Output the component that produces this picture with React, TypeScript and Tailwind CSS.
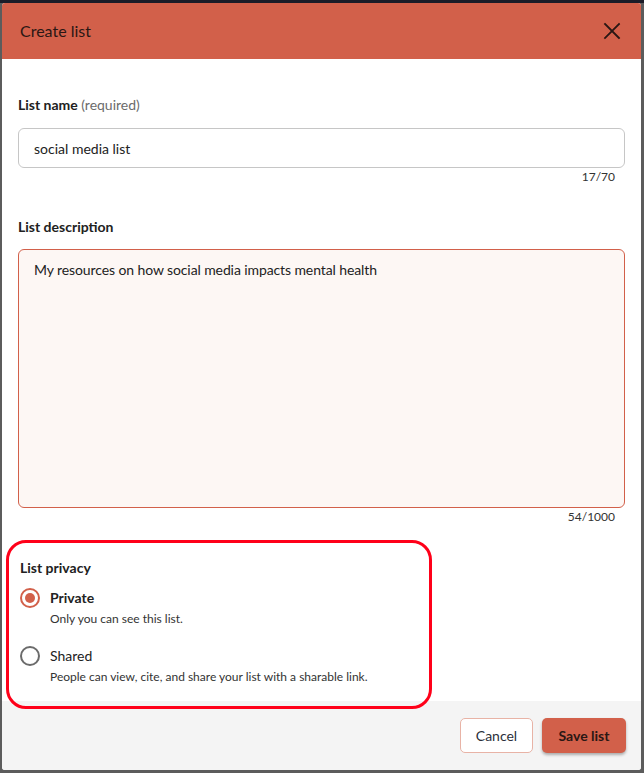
import { useState } from "react";

const PRIVACY_OPTIONS = [
  {
    id: "private",
    label: "Private",
    hint: "Only you can see this list.",
  },
  {
    id: "shared",
    label: "Shared",
    hint: "People can view, cite, and share your list with a sharable link.",
  },
];

function CloseIcon() {
  return (
    <svg width="18" height="18" viewBox="0 0 18 18" fill="none">
      <path
        d="M2 2 L16 16 M16 2 L2 16"
        stroke="#2a1714"
        strokeWidth="1.8"
        strokeLinecap="square"
      />
    </svg>
  );
}

function Radio({ checked }: { checked: boolean }) {
  return (
    <span
      className={`flex h-5 w-5 shrink-0 items-center justify-center rounded-full border-2 ${
        checked ? "border-[#d2604a]" : "border-[#6b6b6b]"
      }`}
    >
      {checked && <span className="h-[10px] w-[10px] rounded-full bg-[#d2604a]" />}
    </span>
  );
}

export default function App() {
  const [name, setName] = useState("social media list");
  const [desc, setDesc] = useState(
    "My resources on how social media impacts mental health"
  );
  const [privacy, setPrivacy] = useState("private");

  return (
    <div
      className="relative h-[773px] w-[644px] overflow-hidden bg-[#5c5c5c] pt-[3px] pl-[2px]"
      style={{ fontFamily: "Lato, 'Noto Sans', sans-serif" }}
    >
      <div className="absolute left-0 top-0 h-[3px] w-full bg-[#1b1c28]" />
      <div className="relative flex h-[767px] w-[639px] flex-col overflow-hidden rounded-[3px] bg-white">
        {/* Header */}
        <header className="flex h-[56px] shrink-0 items-center justify-between bg-[#d2604a] pl-[18px] pr-[20px]">
          <h1 className="text-[16px] text-[#2a1714]">Create list</h1>
          <button type="button" aria-label="Close" className="flex items-center justify-center">
            <CloseIcon />
          </button>
        </header>

        {/* Body */}
        <main className="flex-1 px-4 pt-[36px]">
          <label className="block text-[14px] leading-5 font-bold text-[#212121]">
            List name <span className="font-normal text-[#6b6b6b]">(required)</span>
          </label>
          <input
            value={name}
            onChange={(e) => setName(e.target.value)}
            className="mt-[13px] block h-[40px] w-full rounded-[6px] border border-[#c6c6c6] px-[15px] text-[14px] text-[#222] outline-none"
          />
          <p className="mt-px pr-[10px] text-right text-[12px] leading-4 text-[#333]">
            {name.length}/70
          </p>

          <label className="mt-[32px] block text-[14px] leading-5 font-bold text-[#212121]">
            List description
          </label>
          <textarea
            value={desc}
            onChange={(e) => setDesc(e.target.value)}
            className="mt-[12px] block h-[259px] w-full resize-none rounded-[6px] border border-[#d2604a] bg-[#fdf7f4] px-[15px] py-[10px] text-[14px] leading-5 tracking-[-0.1px] text-[#222] outline-none"
          />
          <p className="mt-px pr-[10px] text-right text-[12px] leading-4 text-[#333]">
            {desc.length}/1000
          </p>

          <fieldset className="mt-[33px] pl-[2px]">
            <legend className="text-[14px] leading-5 font-bold text-[#212121]">
              List privacy
            </legend>
            <div className="mt-[10px] flex flex-col gap-[19px]">
              {PRIVACY_OPTIONS.map((opt) => {
                const checked = privacy === opt.id;
                return (
                  <button
                    type="button"
                    key={opt.id}
                    onClick={() => setPrivacy(opt.id)}
                    className="flex flex-col items-start text-left"
                  >
                    <span className="flex items-center gap-[10px]">
                      <Radio checked={checked} />
                      <span
                        className={`text-[14px] leading-5 text-[#222] ${
                          checked ? "font-bold" : ""
                        }`}
                      >
                        {opt.label}
                      </span>
                    </span>
                    <span className="mt-[3px] pl-[30px] text-[12px] leading-4 text-[#333]">
                      {opt.hint}
                    </span>
                  </button>
                );
              })}
            </div>
          </fieldset>
        </main>

        {/* Footer */}
        <footer className="flex h-[69px] shrink-0 items-center justify-end gap-[9px] bg-[#f4f4f4] pr-[15px]">
          <button
            type="button"
            className="h-[35px] w-[73px] rounded-[5px] border border-[#e8b3a6] bg-white text-[14px] text-[#2b2f3a]"
          >
            Cancel
          </button>
          <button
            type="button"
            className="h-[35px] w-[84px] rounded-[5px] bg-[#d2604a] text-[14px] font-bold text-[#2a1714] shadow-[0_2px_3px_rgba(0,0,0,0.3)]"
          >
            Save list
          </button>
        </footer>

        {/* Highlight annotation */}
        <div className="pointer-events-none absolute left-[4px] top-[537px] h-[169px] w-[426px] rounded-[20px] border-[3px] border-[#ff0019]" />
      </div>
    </div>
  );
}
